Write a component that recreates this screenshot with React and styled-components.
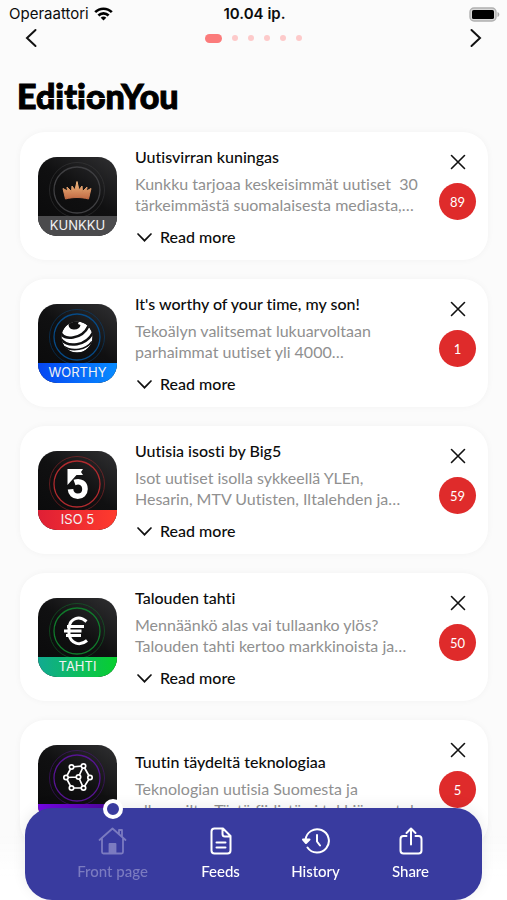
import React from 'react';
import styled, { createGlobalStyle, css } from 'styled-components';

const GlobalStyle = createGlobalStyle`
  *, *::before, *::after { box-sizing: border-box; }
  body {
    margin: 0;
    background: #fbfbfb;
    color: #0c0c0c;
    font-family: Lato, "Liberation Sans", sans-serif;
    font-variant-ligatures: none;
  }
  button { border: 0; padding: 0; background: none; color: inherit; font: inherit; cursor: pointer; }
  h2, p { margin: 0; }
  svg { display: block; }
`;

const Page = styled.div`
  min-height: 100vh;
  padding-bottom: 40px;
`;

const StatusBar = styled.header`
  display: grid;
  grid-template-columns: 1fr auto 1fr;
  align-items: center;
  height: 28px;
  padding: 0 7px 0 9px;
  font-family: Inter, "Liberation Sans", sans-serif;
  font-size: 15px;
  line-height: 20px;
`;

const Carrier = styled.div`
  display: flex;
  align-items: center;
  gap: 5px;
`;

const Clock = styled.div`
  font-size: 15px;
  font-weight: 600;
`;

const Battery = styled.div`
  justify-self: end;
`;

const Pager = styled.nav`
  display: flex;
  align-items: center;
  justify-content: space-between;
  height: 20px;
  padding: 0 25px;
`;

const ArrowButton = styled.button`
  width: 12px;
  height: 20px;
`;

const Dots = styled.div`
  display: flex;
  align-items: center;
  gap: 10px;
`;

const Dot = styled.span`
  width: ${({ $active }) => ($active ? 17 : 6)}px;
  height: ${({ $active }) => ($active ? 9 : 6)}px;
  border-radius: 5px;
  background: ${({ $active }) => ($active ? '#fb7b7b' : '#fdcaca')};
`;

const Brand = styled.div`
  position: relative;
  width: max-content;
  margin: 30px 0 0 17px;
  font-size: 34px;
  line-height: 36px;
  font-weight: 900;
  color: #000;
  -webkit-text-stroke: 1px #000;

  &::after {
    content: '';
    position: absolute;
    left: 24px;
    width: 66px;
    top: 20px;
    height: 1px;
    background: #fbfbfb;
  }
`;

const Feed = styled.main`
  display: flex;
  flex-direction: column;
  gap: 19px;
  padding: 18px 19px 0 20px;
`;

const Card = styled.article`
  display: flex;
  align-items: center;
  height: 128px;
  padding: 0 12px 0 18px;
  border-radius: 25px;
  background: #fff;
  box-shadow: 0 0 7px rgba(0, 0, 0, 0.04);
`;

const Tile = styled.div`
  flex: none;
  display: flex;
  flex-direction: column;
  width: 79px;
  height: 79px;
  border-radius: 19px;
  overflow: hidden;
  background: linear-gradient(215deg, #303032 0%, #101011 45%, #09090a 100%);
`;

const TileLabel = styled.div`
  height: 20px;
  background: ${({ $fill }) => $fill};
  color: #f2f2f2;
  font-family: Inter, sans-serif;
  font-size: 13px;
  line-height: 19px;
  text-align: center;
`;

const Body = styled.div`
  flex: 1;
  min-width: 0;
  padding: 2px 0 0 18px;
`;

const Title = styled.h2`
  font-size: 16px;
  line-height: 24px;
  font-weight: 500;
  margin-bottom: 4px;
  white-space: nowrap;
`;

const Summary = styled.p`
  color: #909090;
  font-size: 16px;
  line-height: 21px;
  white-space: pre;
`;

const ReadMore = styled.button`
  display: flex;
  align-items: center;
  gap: 8px;
  margin-top: 10px;
  padding-left: 2px;
  font-size: 16px;
  line-height: 24px;
  font-weight: 500;
`;

const Side = styled.div`
  display: flex;
  flex-direction: column;
  align-items: center;
  align-self: flex-start;
  gap: 13px;
  padding-top: 22px;
`;

const CloseButton = styled.button`
  width: 16px;
  height: 16px;
`;

const Count = styled.span`
  display: grid;
  place-items: center;
  width: 37px;
  height: 37px;
  border-radius: 50%;
  background: #df2b2b;
  color: #fff;
  font-size: 13px;
  line-height: 16px;
`;

const BottomArea = styled.div`
  position: fixed;
  inset: auto 0 0 0;
  padding: 0 25px;
  background: linear-gradient(transparent 30%, #fff 75%);
`;

const TabBar = styled.nav`
  display: grid;
  grid-template-columns: 121px repeat(3, 1fr);
  padding: 0 24px 0 27px;
  height: 92px;
  border-radius: 27px;
  background: #393b9f;
  box-shadow: 0 -2px 14px rgba(0, 0, 0, 0.08);
`;

const Tab = styled.button`
  position: relative;
  display: flex;
  flex-direction: column;
  align-items: center;
  gap: 4px;
  padding-top: 19px;
  font-size: 15px;
  line-height: 24px;
  font-weight: 500;
  color: ${({ $current }) => ($current ? '#7b7bc0' : '#fff')};

  ${({ $current }) =>
    $current &&
    css`
      &::before {
        content: '';
        position: absolute;
        top: -9px;
        width: 20px;
        height: 20px;
        border: 4px solid #fff;
        border-radius: 50%;
        background: #393b9f;
      }
    `}
`;

const Wifi = () => (
  <svg width="19" height="14" viewBox="0 0 19 14" fill="none" stroke="#000" strokeWidth="2.6" aria-hidden="true">
    <path d="M1.2 5.2c4.6-4.7 12-4.7 16.6 0" />
    <path d="M4.4 8.5c2.9-2.9 7.3-2.9 10.2 0" />
    <path d="M9.5 13.6 6.7 10.7c1.6-1.5 4-1.5 5.6 0z" fill="#000" stroke="none" />
  </svg>
);

const BatteryIcon = () => (
  <svg width="31" height="15" viewBox="0 0 31 15" aria-hidden="true">
    <rect x="1" y="1" width="26" height="13" rx="4" fill="#d8d8d8" stroke="#b0b0b0" strokeWidth="1.4" />
    <rect x="3" y="3" width="22" height="9" rx="1.6" fill="#000" />
    <path d="M28.5 5c2.4.8 2.4 4.2 0 5z" fill="#aaa" />
  </svg>
);

const Arrow = ({ d }) => (
  <svg width="12" height="20" viewBox="0 0 12 20" fill="none" stroke="#111" strokeWidth="2" strokeLinecap="round" aria-hidden="true">
    <path d={d} />
  </svg>
);

const Chevron = () => (
  <svg width="15" height="12" viewBox="0 0 15 12" fill="none" stroke="#111" strokeWidth="1.7" strokeLinecap="round" aria-hidden="true">
    <path d="m1 3 6.5 6.7L14 3" />
  </svg>
);

const Cross = () => (
  <svg width="16" height="16" viewBox="0 0 16 16" stroke="#111" strokeWidth="1.6" strokeLinecap="round" aria-hidden="true">
    <path d="m1.5 1.5 13 13m0-13-13 13" />
  </svg>
);

const Emblem = ({ ring, children }) => (
  <svg width="79" height="59" viewBox="0 0 79 59" fill="none" aria-hidden="true">
    <circle cx="39" cy="33" r="23" stroke={ring} strokeWidth="1.3" />
    <circle cx="39" cy="33" r="27.5" stroke={ring} strokeWidth="1" opacity=".5" />
    {children}
  </svg>
);

const Crown = () => (
  <>
    <path
      d="M27.500 42 25 31.500l4.500 2.500-.5-4 4.500 4.500.5-5.500 3 4 2-8.500 2 8.500 3-4 .5 5.500 4.500-4.500-.5 4 4.500-2.500L50.500 42c-7-2-16-2-23 0z"
      fill="url(#crownGold)"
      stroke="url(#crownGold)"
      strokeWidth="1"
      strokeLinejoin="round"
    />
    <defs>
      <linearGradient id="crownGold" x1="0" y1="24" x2="0" y2="43" gradientUnits="userSpaceOnUse">
        <stop stopColor="#f3bd82" />
        <stop offset="1" stopColor="#bd6540" />
      </linearGradient>
    </defs>
  </>
);

const Globe = () => (
  <>
    <clipPath id="globeDisc"><circle cx="39" cy="33" r="15.500" /></clipPath>
    <g clipPath="url(#globeDisc)">
      <circle cx="39" cy="33" r="15.500" fill="#fff" />
      <path d="M31 15c-1.500 7 0 10 4.500 10.500 4 .3 6.500-1.500 7-4.500l-2.500-1 2-5z" fill="#101011" />
      <path d="M22 27.500c2 5.500 7 7 13 6 7.500-1.200 12.500-5 15.500-11.500" stroke="#101011" strokeWidth="2.600" />
      <path d="M23 35c3.500 5 9 6.300 16 5.200 7.500-1.300 12.500-5.200 16-11.700" stroke="#101011" strokeWidth="2.400" />
      <path d="M26 42.500c4.500 3.200 9 3.700 15 2.700 6-1 10-3.500 13-7.700" stroke="#101011" strokeWidth="1.600" />
    </g>
  </>
);

const Five = () => (
  <>
    <path d="M29.500 18H45l-2 3 2 3h-6.500L29.500 34z" fill="#fff" />
    <path d="M36.500 31.500c6-2.200 10.500 1.200 10.500 6.500 0 4.200-3.200 7.300-7.200 7.300-4.200 0-7-3-7.300-7" stroke="#fff" strokeWidth="5.600" />
  </>
);

const Euro = () => (
  <path d="M48.500 23.500C41 17 32.500 20.500 31 29v7c1.500 9.500 11 12.500 18 6.500M29 28.500h17M26 33h17.500M28 37.500h15" stroke="#fff" strokeWidth="3" />
);

const NETWORK_NODES = [[33.5, 22], [45.5, 21], [28, 32.5], [40.5, 32], [52, 32.5], [33.5, 43], [45.5, 43]];

const Network = () => (
  <g stroke="#fff" strokeWidth="1.700">
    <path d="m33.500 22 12-1 6.500 11.500-6.500 10.500h-12L28 32.500zM28 32.500l12.500-.5 5-11M40.500 32l5 11" />
    {NETWORK_NODES.map(([x, y]) => (
      <circle key={`${x}-${y}`} cx={x} cy={y} r="2.200" fill="#111" />
    ))}
  </g>
);

const HomeIcon = () => (
  <svg width="29" height="28" viewBox="0 0 29 28" fill="none" stroke="currentColor" strokeWidth="1.800" strokeLinejoin="round" strokeLinecap="round" aria-hidden="true">
    <path d="M1.500 13 14.500 1.500 27.500 13M21 7V3h3v6.500M4 11.500V25q0 1.500 1.500 1.500h18Q25 26.500 25 25V11.500" />
    <path d="M11.500 26v-9h6v9z" fill="currentColor" />
  </svg>
);

const FeedsIcon = () => (
  <svg width="22" height="28" viewBox="0 0 22 28" fill="none" stroke="currentColor" strokeWidth="2" strokeLinejoin="round" strokeLinecap="round" aria-hidden="true">
    <path d="M4 1.500h9L20.500 9v14.500q0 3-3 3H4.500q-3 0-3-3v-19q0-3 3-3M12.500 1.500v5.500q0 2.500 2.500 2.500h5.500M6.500 15.500h9M6.500 20.500h9" />
  </svg>
);

const HistoryIcon = () => (
  <svg width="28" height="28" viewBox="0 0 28 28" fill="none" stroke="currentColor" strokeWidth="2" strokeLinecap="round" strokeLinejoin="round" aria-hidden="true">
    <path d="M3.500 13A11.700 11.700 0 1 1 5.500 20.500M15 8v6.500l3 4" />
    <path d="m1 12.500 3 3.500 3.500-3.500z" fill="currentColor" />
  </svg>
);

const ShareIcon = () => (
  <svg width="24" height="28" viewBox="0 0 24 28" fill="none" stroke="currentColor" strokeWidth="2" strokeLinejoin="round" strokeLinecap="round" aria-hidden="true">
    <path d="M7.500 9H4.500q-3 0-3 3v11.500q0 3 3 3h15q3 0 3-3V12q0-3-3-3h-3M12 17.500V1.500M7.500 6 12 1.500 16.500 6" />
  </svg>
);

const FEEDS = [
  { name: 'KUNKKU', title: 'Uutisvirran kuningas', text: 'Kunkku tarjoaa keskeisimmät uutiset  30\ntärkeimmästä suomalaisesta mediasta,…', count: 89, ring: '#3f3f42', fill: '#4b4b4d', art: Crown, more: true },
  { name: 'WORTHY', title: "It's worthy of your time, my son!", text: 'Tekoälyn valitsemat lukuarvoltaan\nparhaimmat uutiset yli 4000…', count: 1, ring: '#064a86', fill: 'linear-gradient(90deg, #0646f2, #078bff)', art: Globe, more: true },
  { name: 'ISO 5', title: 'Uutisia isosti by Big5', text: 'Isot uutiset isolla sykkeellä YLEn,\nHesarin, MTV Uutisten, Iltalehden ja…', count: 59, ring: '#b02a2e', fill: 'linear-gradient(90deg, #df1f35, #ff3b2d)', art: Five, more: true },
  { name: 'TAHTI', title: 'Talouden tahti', text: 'Mennäänkö alas vai tullaanko ylös?\nTalouden tahti kertoo markkinoista ja…', count: 50, ring: '#107a2b', fill: 'linear-gradient(90deg, #11aa91, #08cf2e)', art: Euro, more: true },
  { name: '', title: 'Tuutin täydeltä teknologiaa', text: 'Teknologian uutisia Suomesta ja\nulkomailta. Tästä fiidistä ei tekkiä puutu!', count: 5, ring: '#571492', fill: 'linear-gradient(90deg, #7507e8, #4a0795)', art: Network, more: false },
];

const TABS = [
  { label: 'Front page', icon: HomeIcon, current: true },
  { label: 'Feeds', icon: FeedsIcon },
  { label: 'History', icon: HistoryIcon },
  { label: 'Share', icon: ShareIcon },
];

const FeedCard = ({ feed }) => {
  const Art = feed.art;
  return (
    <Card>
      <Tile>
        <Emblem ring={feed.ring}><Art /></Emblem>
        <TileLabel $fill={feed.fill}>{feed.name}</TileLabel>
      </Tile>
      <Body>
        <Title>{feed.title}</Title>
        <Summary>{feed.text}</Summary>
        {feed.more && <ReadMore type="button"><Chevron />Read more</ReadMore>}
      </Body>
      <Side>
        <CloseButton type="button" aria-label={`Remove ${feed.title}`}><Cross /></CloseButton>
        <Count>{feed.count}</Count>
      </Side>
    </Card>
  );
};

export default function App() {
  return (
    <Page>
      <GlobalStyle />
      <StatusBar>
        <Carrier>Operaattori <Wifi /></Carrier>
        <Clock>10.04 ip.</Clock>
        <Battery><BatteryIcon /></Battery>
      </StatusBar>
      <Pager aria-label="Pages">
        <ArrowButton type="button" aria-label="Previous"><Arrow d="M10.500 2 2 10l8.500 8" /></ArrowButton>
        <Dots>
          {[0, 1, 2, 3, 4, 5].map((i) => <Dot key={i} $active={i === 0} />)}
        </Dots>
        <ArrowButton type="button" aria-label="Next"><Arrow d="M1.500 2 10 10l-8.500 8" /></ArrowButton>
      </Pager>
      <Brand>EditionYou</Brand>
      <Feed>
        {FEEDS.map((feed) => <FeedCard key={feed.title} feed={feed} />)}
      </Feed>
      <BottomArea>
        <TabBar aria-label="Main">
          {TABS.map(({ label, icon: Icon, current }) => (
            <Tab key={label} type="button" $current={current} aria-current={current ? 'page' : undefined}>
              <Icon />
              {label}
            </Tab>
          ))}
        </TabBar>
      </BottomArea>
    </Page>
  );
}
